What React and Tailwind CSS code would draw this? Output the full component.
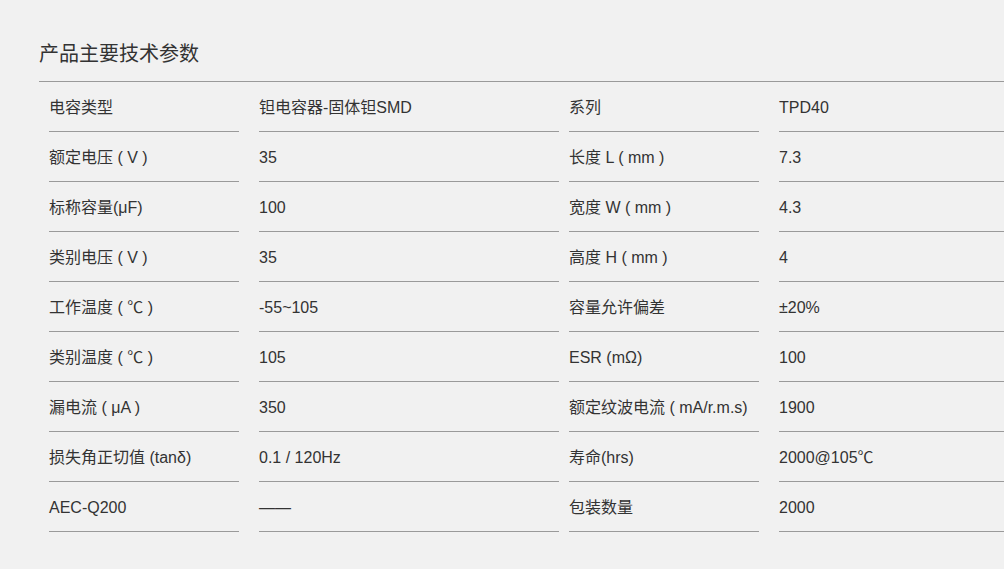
import React from 'react';

const rows = [
    ['电容类型', '钽电容器-固体钽SMD', '系列', 'TPD40'],
    ['额定电压 ( V )', '35', '长度 L ( mm )', '7.3'],
    ['标称容量(μF)', '100', '宽度 W ( mm )', '4.3'],
    ['类别电压 ( V )', '35', '高度 H ( mm )', '4'],
    ['工作温度 ( ℃ )', '-55~105', '容量允许偏差', '±20%'],
    ['类别温度 ( ℃ )', '105', 'ESR (mΩ)', '100'],
    ['漏电流 ( μA )', '350', '额定纹波电流 ( mA/r.m.s)', '1900'],
    ['损失角正切值 (tanδ)', '0.1 / 120Hz', '寿命(hrs)', '2000@105℃'],
    ['AEC-Q200', '——', '包装数量', '2000'],
];

function Cell({ children, className }) {
    return (
        <div className={`shrink-0 h-[50px] border-b border-[#9a9a9a] pt-[14px] text-[16px] leading-[24px] whitespace-pre ${className}`}>
            {children}
        </div>
    );
}

export default function App() {
    return (
        <div
            className="w-full min-h-screen bg-[#f1f1f1] text-[#333] overflow-hidden pt-[40px]"
            style={{ fontFamily: '"Liberation Sans", "Noto Sans CJK SC", sans-serif' }}
        >
            <div className="ml-[39px] w-[1100px]">
                <h2 className="text-[20px] leading-[28px] pb-[13px] border-b border-[#9a9a9a]">
                    产品主要技术参数
                </h2>
                {rows.map((r, i) => (
                    <div key={i} className="flex">
                        <Cell className="ml-[10px] w-[190px]">{r[0]}</Cell>
                        <Cell className="ml-[20px] w-[300px]">{r[1]}</Cell>
                        <Cell className="ml-[10px] w-[190px]">{r[2]}</Cell>
                        <Cell className="ml-[20px] w-[300px]">{r[3]}</Cell>
                    </div>
                ))}
            </div>
        </div>
    );
}
